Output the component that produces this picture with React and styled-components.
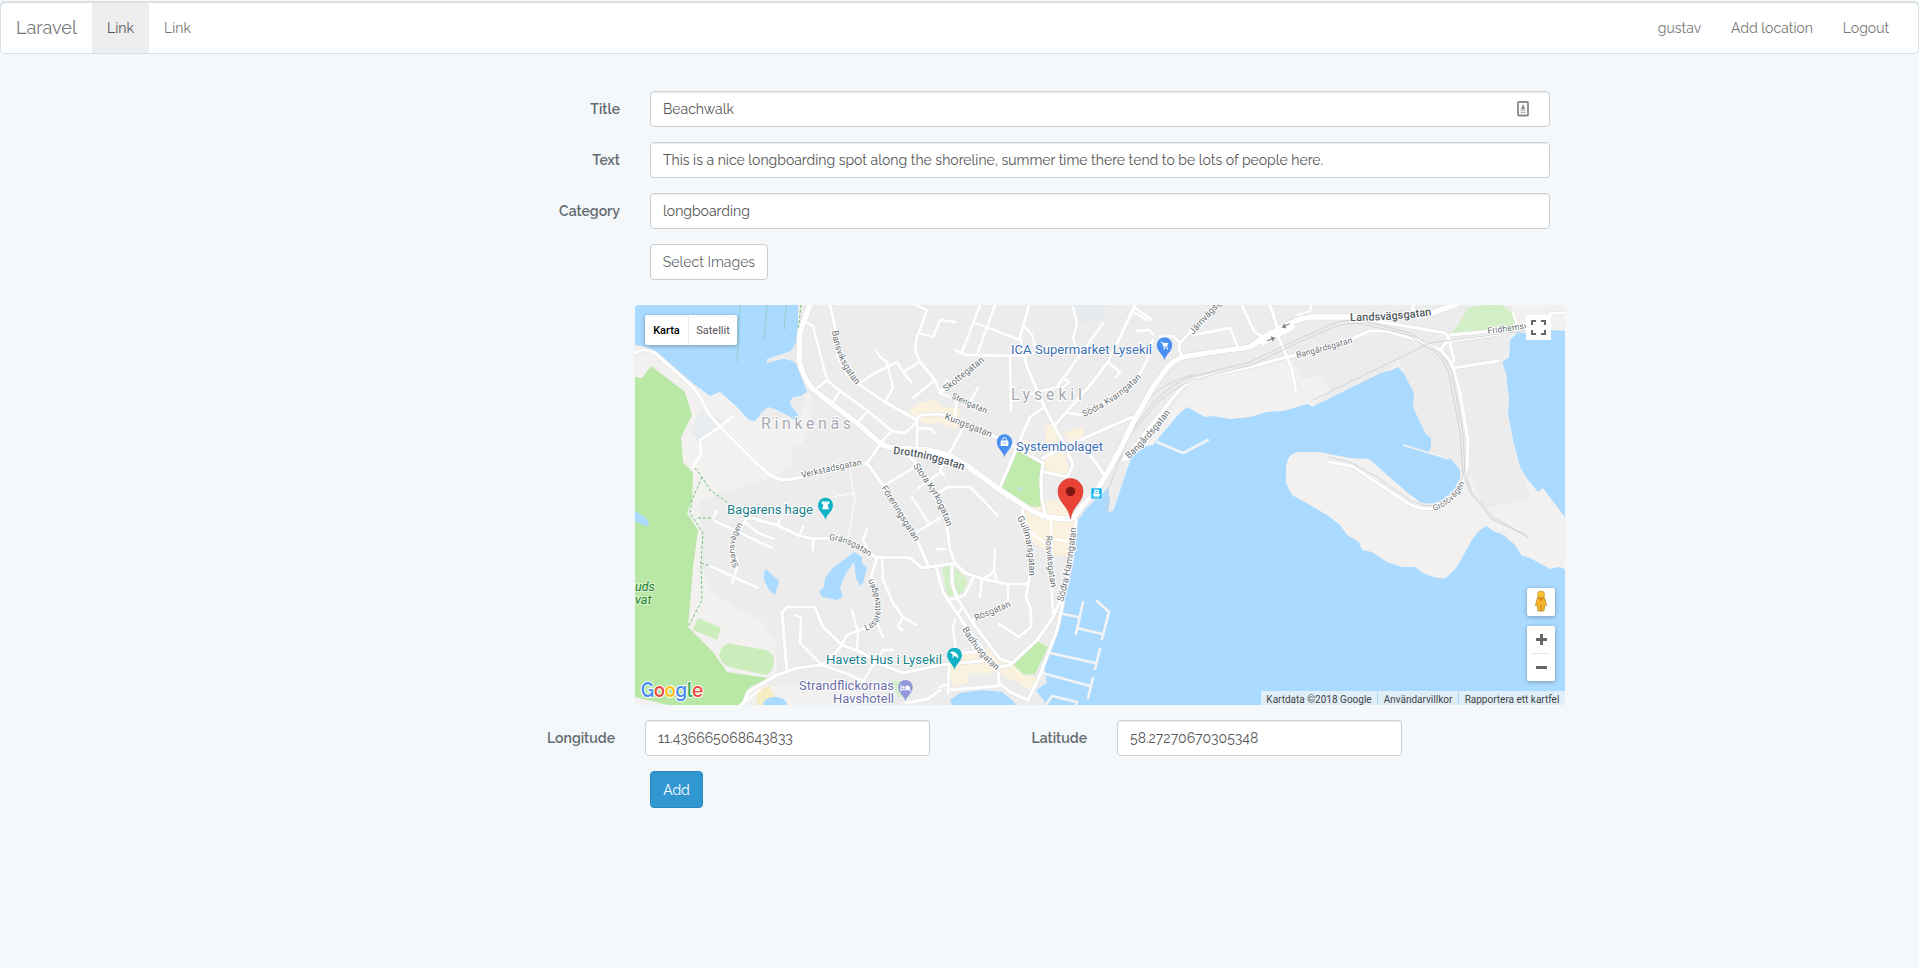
import React from "react";
import styled, { createGlobalStyle, css } from "styled-components";

const GlobalStyle = createGlobalStyle`
  * { box-sizing: border-box; }
  body {
    margin: 0;
    background: #f4f8fb;
    color: #636b6f;
    font-family: Raleway, Lato, "Open Sans", sans-serif;
    font-size: 14px;
    line-height: 22px;
    overflow: hidden;
  }
`;

const Page = styled.div`
  min-height: 968px;
  border-top: 1px solid #f8f8f8;
`;
const Navbar = styled.nav`
  display: flex;
  height: 52px;
  margin-top: 1px;
  border: 1px solid #d3e0e9;
  border-radius: 5px;
  background: #fff;
  box-shadow: 0 -1px 0 #e0e2e3;
`;
const Brand = styled.a`
  width: 91px;
  padding: 14px 0 0 15px;
  font-size: 18px;
  color: #777;
`;
const NavItem = styled.a`
  width: ${(p) => p.$w}px;
  padding-top: 14px;
  text-align: center;
  color: ${(p) => (p.$active ? "#555" : "#777")};
  background: ${(p) => (p.$active ? "#eee" : "transparent")};
`;
const NavRight = styled.div`
  display: flex;
  margin-left: auto;
  margin-right: 14px;
`;

const Form = styled.form`
  width: 1035px;
  margin: 37px 0 0 530px;
`;
const Row = styled.div`
  display: grid;
  grid-template-columns: 90px 900px;
  column-gap: 30px;
  align-items: center;
  margin-bottom: 15px;
`;
const Label = styled.label`
  font-weight: 600;
  text-align: right;
  white-space: nowrap;
`;
const Field = styled.div`
  display: flex;
  align-items: center;
  height: 36px;
  padding: 0 20px 0 12px;
  background: #fff;
  border: 1px solid #ccd0d2;
  border-radius: 4px;
  box-shadow: inset 0 1px 1px rgba(0, 0, 0, 0.075);
`;
const Input = styled.input`
  flex: 1;
  min-width: 0;
  height: 22px;
  border: 0;
  padding: 0;
  outline: 0;
  background: transparent;
  font: inherit;
  color: #555;
`;
const Button = styled.button`
  grid-column: 2;
  justify-self: start;
  width: ${(p) => p.$w}px;
  height: ${(p) => p.$h}px;
  padding: 0;
  border: 1px solid #ccc;
  border-radius: 4px;
  background: #fff;
  color: #636b6f;
  font: inherit;
  ${(p) =>
    p.$primary &&
    css`
      background: #3097d1;
      border-color: #2a88bd;
      color: #fff;
    `}
`;
const Coordinates = styled.div`
  display: grid;
  grid-template-columns: 115px 285px 187px 285px;
  align-items: center;
  margin: 15px 0;
  ${Label} { padding-right: 30px; }
`;

const MapBox = styled.div`
  position: relative;
  width: 930px;
  height: 400px;
  margin: 25px 0 15px 105px;
  border-radius: 4px;
  overflow: hidden;
  font-family: Roboto, sans-serif;
`;
const MapDrawing = styled.svg`
  display: block;
  width: 930px;
  height: 400px;
`;
const control = css`
  position: absolute;
  background: #fff;
  border-radius: 2px;
  box-shadow: 0 1px 4px rgba(0, 0, 0, 0.3);
`;
const MapTypes = styled.div`
  ${control}
  left: 10px;
  top: 10px;
  display: flex;
  height: 30px;
`;
const MapType = styled.span`
  width: ${(p) => p.$w}px;
  font-size: 11px;
  line-height: 31px;
  text-align: center;
  color: ${(p) => (p.$on ? "#000" : "#565656")};
  font-weight: ${(p) => (p.$on ? 500 : 400)};
  & + & { border-left: 1px solid #e8e8e8; }
`;
const Fullscreen = styled.div`
  ${control}
  top: 10px;
  right: 14px;
  width: 25px;
  height: 25px;
  border-radius: 0;
  box-shadow: none;
`;
const Pegman = styled.div`
  ${control}
  right: 10px;
  top: 283px;
  width: 28px;
  height: 28px;
`;
const Zoom = styled.div`
  ${control}
  right: 10px;
  top: 321px;
  width: 28px;
  height: 55px;
`;
const Legal = styled.div`
  position: absolute;
  right: 0;
  bottom: 0;
  display: flex;
  gap: 1px;
  height: 14px;
`;
const LegalItem = styled.span`
  width: ${(p) => p.$w}px;
  background: rgba(245, 245, 245, 0.72);
  font-size: 10px;
  line-height: 17px;
  text-align: center;
  white-space: nowrap;
  color: #444;
`;
const MapText = styled.text`
  font-family: ${(p) => p.$f || "Roboto"}, sans-serif;
  font-size: ${(p) => p.$s || 9}px;
  font-weight: ${(p) => p.$b || 400};
  font-style: ${(p) => (p.$i ? "italic" : "normal")};
  fill: ${(p) => p.$c || "#666c70"};
  stroke: ${(p) => p.$halo || "#fff"};
  stroke-width: 2px;
  stroke-linejoin: round;
  paint-order: stroke;
`;

const MAIN = "M810 305L800 332L799 360Q803 378 812 388L833 405L857 423L880 443Q886 447 893 448L925 450Q945 452 963 463L1000 490L1023 505Q1035 514 1047 517L1066 519Q1074 519 1077 513L1083 505L1095 493L1103 480L1120 450L1133 423L1153 387L1167 368Q1174 360 1183 357L1207 353L1250 347L1263 338L1287 325Q1298 319 1310 317L1350 317L1433 313L1457 304";

const MEDIUM = [
  "M635 353Q643 347 655 353L693 387L702 400L708 413L720 427L758 465L770 475Q780 480 787 480L803 477L837 468L867 463L880 445",
  "M830 305L835 327L838 357L847 375L860 385L885 402L917 420L920 415L940 414L1003 440L1043 463L1041 480L1042 500L1046 518",
  "M867 463L883 485L897 510L917 540L928 565",
  "M905 452L920 467L933 490L940 500L947 527L950 550L955 563L965 573L983 579L1007 584L1027 584",
  "M745 520Q750 516 758 520L777 525L800 536L813 539L830 538L863 547L875 557L910 558L922 568L950 564",
  "M743 705L748 692L777 675L797 668L822 665L840 648L847 635L873 625L879 614L878 600L871 577L877 558",
  "M787 672L782 613L787 607L815 607L823 627L842 645L863 653L878 663L903 673L940 665L990 660",
  "M936 567L943 592L958 615L985 653Q990 665 1000 667L1010 665L1037 640L1053 617L1065 590L1073 550L1076 520",
  "M952 563L952 583L957 598L973 623L1000 659L1012 663",
  "M998 668L999 683L1010 692L1028 700L1040 675L1057 630L1063 603",
  "M1029 305L1020 337L1027 367L1045 408L1067 450L1073 465L1067 477L1045 472",
  "M1135 305L1122 333L1108 362L1092 383L1055 425",
  "M1123 460L1153 423L1177 393Q1184 383 1200 378L1250 367L1287 357L1333 347L1370 331L1387 331L1417 340L1440 350Q1450 358 1454 370L1460 393L1468 440L1467 467Q1463 483 1457 490Q1446 506 1430 509Q1415 509 1403 500L1373 480L1352 466L1328 462",
  "M1370 320L1445 333L1449 339L1440 350M1449 339L1454 360L1450 366",
  "M1450 335L1483 332L1527 328L1540 323L1552 313L1565 313M1450 341L1507 333M1453 368L1498 361",
  "M1277 334L1287 357L1292 370L1296 392",
  "M1217 305L1190 332L1180 343L1179 350L1183 358",
  "M1242 305L1250 323L1255 332L1263 337M1270 305L1277 327",
  "M1043 408L1030 417L1000 487M1043 458L1073 443L1132 417M1083 445L1103 473",
  "M1022 510L1030 543L1030 573L1026 597L1031 610L1031 627L1019 637L999 624",
];

const MINOR = [
  "M733 416L720 427L700 440L701 455L693 467",
  "M807 323L813 326L827 380L815 390M827 380L840 391L868 411L892 431L880 443M840 391L832 404M868 411L857 423M892 431L905 433L917 422",
  "M860 383L875 373L897 362L903 372L920 362L935 380L913 398M876 350L880 357L887 362L893 388L885 402M903 372L911 382",
  "M915 305L927 310L917 337L915 350L920 362L935 380L940 392M918 333L933 337L940 320L955 322",
  "M917 420L917 455M917 428L932 429L934 433",
  "M885 485L920 464M918 488L940 473M912 497L930 525M917 532L940 518M937 549L945 549",
  "M783 515L777 525M803 527L799 536M813 540L813 550",
  "M745 522L737 533L732 547L738 565L732 583M715 521L772 548M717 511L713 518M745 522L758 533L774 539M710 566L758 588",
  "M795 615L801 617L800 643L822 665L850 675L863 681L872 667L883 650L893 650",
  "M852 610L858 633L857 650M882 558L883 580L893 603L903 617L916 625M903 617L898 627L902 630M877 623L883 637M867 529L863 540L868 550",
  "M947 600L957 598L965 595L973 578M955 620L953 627L956 653L977 652M949 667L948 693M948 690L998 686M940 687L948 684M957 615L962 608",
  "M740 705L760 690M905 703L928 699L940 690",
  "M1028 530L1047 545M1052 539L1072 542M995 550L994 570L997 581M994 572L982 580L980 597M1008 585L1008 600L1000 607L973 620",
  "M940 492L948 487L970 487L983 500L997 515M963 428L940 470L944 475",
  "M980 305L962 352M995 305L977 355M973 322L1020 340M955 350L965 355L1023 356L1040 351M1010 357L1011 410",
  "M983 360L940 393L947 380M957 398L955 415M978 388L970 402M940 393L985 412",
  "M1073 307L1077 323L1073 338L1077 350M1103 323L1080 355L1057 387L1027 395M1063 378L1069 382L1060 390M1025 327L1032 335L1036 350",
  "M1108 362L1120 372L1116 377M1135 308L1152 320M1133 312L1147 320M1136 331L1149 330L1153 334",
  "M1153 340L1147 360L1137 380L1120 392L1083 415L1068 413M1180 343L1173 336L1160 337M1193 335L1230 328L1237 345M1513 313L1517 325M1298 315L1310 311L1311 305M1413 305L1413 310",
  "M1123 460L1128 459",
];

const PIERS =
  "M1063 614L1078 617M1083 602L1076 634M1077 628L1102 634M1097 601L1109 612L1102 639M1050 653L1095 663M1100 649L1095 669M1042 673L1090 686M1093 678L1088 698M1047 703L1052 696L1077 702L1076 705M1157 442L1183 453L1208 440";

const RAILS = [
  "M1313 400L1430 343L1507 333L1530 330",
  "M1107 512L1108 490L1130 433L1153 403Q1174 382 1190 377L1250 362L1290 343L1330 325Q1345 319 1360 320L1410 333L1437 350Q1448 360 1452 373L1463 433L1465 473L1472 493L1482 504L1493 517L1528 537",
  "M1130 436L1156 404Q1175 387 1194 380L1252 365L1293 345L1332 328Q1346 322 1362 324L1408 335L1434 351Q1445 361 1449 374L1460 433L1463 473L1470 493L1480 504L1492 519L1527 536",
  "M1328 457L1350 462L1377 477L1410 500Q1426 508 1440 505Q1459 498 1465 470",
  "M1130 425L1152 395Q1168 382 1192 375",
];

const FOOTPATHS =
  "M801 305L798 333M695 468L702 477L710 490L727 502L740 515M702 477L692 500L690 513L703 533L701 563L702 600L688 627M698 518L713 518M701 563L710 566";

const STREETS = [
  ["verk", "M802 478Q830 471 862 465", "Verkstadsgatan", 8.8],
  ["bans", "M832 331Q836 363 858 387", "Bansviksgatan", 9.2],
  ["fore", "M881 488L895 510L920 550", "Föreningsgatan", 9.2],
  ["stora", "M913 466L930 490Q940 505 950 536", "Stora Kyrkogatan", 9.2],
  ["kung", "M944 419L1000 441", "Kungsgatan", 9.4],
  ["sten", "M951 398L995 418", "Stengatan", 8.4],
  ["skott", "M946 392L992 355", "Skottegatan", 9.2],
  ["gran", "M829 540Q850 541 875 561", "Gränsgatan", 8.6],
  ["skans", "M739 566Q727 545 746 520", "Skansvägen", 8.2],
  ["lasa", "M866 631Q893 621 870 574", "Lasarettsvägen", 8.8],
  ["gull", "M1017 518Q1030 540 1029 580", "Gullmarsgatan", 9.2],
  ["rosv", "M1046 536Q1046 561 1052 592", "Rosviksgatan", 8.7],
  ["hamn", "M1063 602Q1073 568 1077 520", "Södra Hamngatan", 9.4],
  ["rosg", "M976 621L1014 605", "Rösgatan", 9],
  ["badh", "M962 629Q975 653 1000 674", "Badhusgatan", 9.2],
  ["kvarn", "M1084 417Q1120 401 1145 374", "Södra Kvarngatan", 8.9],
  ["bang", "M1129 459Q1153 437 1176 405", "Bangårdsgatan", 9.2],
  ["bang2", "M1297 358Q1325 351 1358 341", "Bangårdsgatan", 8.6],
  ["jarn", "M1193 335L1250 272", "Järnvägsgatan", 9.2],
  ["frid", "M1488 334L1560 324", "Fridhemsvägen", 8.8],
  ["groto", "M1434 511Q1461 502 1470 468", "Grötövägen", 8.3],
];

const PIN = "M0 15C-1 9 -8 6 -8 -1A8 8 0 1 1 8 -1C8 6 1 9 0 15Z";

function Poi({ x, y, color, s = 1, children }) {
  return (
    <g transform={`translate(${x} ${y}) scale(${s})`}>
      <path d={PIN} fill={color} />
      {children}
    </g>
  );
}

function MapCanvas() {
  return (
    <MapDrawing viewBox="635 305 930 400">
      <rect x="635" y="305" width="930" height="400" fill="#ececec" />
      <g fill="#f2f1f0">
        <path d="M635 345L657 350L720 390L753 418L800 420L807 390L812 397L812 415L803 443L793 447L792 467L765 480L730 490L700 500L702 570L712 592L740 610L763 622L775 640L777 675L742 705L635 705Z" />
        <path d="M1123 470L1140 450L1190 383L1215 376L1250 370L1293 360L1300 378L1316 378L1320 372L1330 390L1312 408L1180 430Z" />
        <path d="M1280 450L1370 459L1393 480L1432 503L1460 480L1472 475L1482 506L1530 498L1526 482L1512 450L1500 365L1509 350L1512 305H1565V580H1280Z" />
        <path d="M1390 369L1398 360L1405 372L1400 380Z" />
        <path d="M742 705L760 685L860 688L860 705Z" />
      </g>
      <path d="M1460 478L1470 475L1486 508L1530 498L1525 480L1518 465L1510 430L1505 370L1498 350L1415 390L1430 445Z" fill="#ececec" />
      <path d="M690 430L702 410L722 420L700 445Z" fill="#e8ecee" />
      <path d="M1073 305H1108L1100 319L1080 323Z" fill="#e6eaed" />
      <g fill="#b9e7a6">
        <path d="M635 377L642 378L651 366L685 392L692 415L681 437L683 462L693 473L692 500L687 513L698 530L693 567L688 627L713 652L727 672L768 678L750 687L742 705H668L635 697Z" />
        <path d="M1017 451L1043 463L1041 480L1042 508L1027 505L1001 487Z" fill="#c0ebad" />
        <path d="M1037 641L1048 647L1035 674L1020 675L1012 667Z" fill="#c0ebad" />
        <path d="M698 618L721 628L717 640L693 630ZM728 643L765 650Q774 653 774 660Q774 670 767 675L733 668Q721 665 719 655Q721 646 728 643Z" fill="#cbedbc" />
        <path d="M942 568L952 565L968 580L963 593L947 597ZM1463 317L1468 308L1483 305H1502L1513 313L1515 323L1503 331L1450 333L1457 327ZM891 681H910V697H898Z" fill="#d3efc8" />
      </g>
      <g fill="#faf1df">
        <path d="M909 412L913 407L923 402L937 400L940 406L960 409L957 430L940 423L926 424L915 418Z" />
        <path d="M1044 427L1052 423L1063 447L1070 474L1057 477L1043 467L1047 450ZM1063 433L1082 426L1085 437L1071 445ZM1022 438L1040 452L1027 455Z" />
        <path d="M1023 510L1045 505L1047 500H1065L1077 517L1073 542L1068 556L1053 555L1040 547L1025 537L1029 530Z" />
        <path d="M960 655L990 648L998 658L1008 660L1025 676L1040 678L1030 690L1018 683L1000 673L968 673V682L953 688L949 667Z" />
      </g>
      <path d="M757 690L769 686L780 705H757Z" fill="#f6edc3" />
      <g fill="#aadaff">
        <path d="M635 305H798V328L796 343L791 351L767 359V363L783 359L793 361L797 365L807 392L800 396L793 397L790 401L791 406L798 415L799 424L792 418L783 413L775 409L768 407L762 412L755 421Q750 421 747 418L737 407L727 398L720 392L710 396L695 385L657 352L647 347L635 345Z" />
        <path d="M1187 407L1205 417L1212 416L1230 419L1250 417L1267 412L1283 411L1308 404L1312 407L1383 372L1390 371L1398 367L1403 372L1414 393L1413 407L1425 433L1431 438L1431 448L1428 453L1447 458L1450 458L1460 470V478L1453 492L1443 500Q1432 506 1420 502L1408 493L1393 480L1369 459L1350 458L1320 452H1303Q1292 451 1288 459L1286 467L1286 483L1292 495L1310 505L1327 515L1340 525L1347 535L1359 542L1362 550L1372 552L1387 562L1402 567L1415 567L1423 573Q1440 581 1447 577L1457 567L1473 538L1480 530L1486 526L1495 532L1502 534L1515 545L1522 556L1528 557L1550 569L1558 567L1565 569V705H1047L1036 690L1047 683L1044 665L1049 650L1060 613L1068 587L1073 560L1078 520L1087 508L1095 500L1108 488L1110 500L1108 512L1113 511L1117 500L1127 470L1135 448L1153 445L1157 440L1178 415Z" />
        <path d="M1510 340L1518 332L1534 334L1550 330L1565 331V517L1552 500L1543 488L1538 492L1528 480L1520 467L1513 440L1508 413L1509 400L1506 373L1502 362L1509 357Z" />
        <path d="M952 705L950 700L960 693L983 690L1002 692L1012 700L1016 705ZM635 511L643 516Q651 521 648 527L635 521ZM764 573L766 569L779 581L775 595L769 590L764 580ZM850 555L854 552L862 557L862 563L867 568L863 583L860 586L856 578L854 562L845 575L840 588L843 597L837 600L822 597L819 591L824 587L825 578L833 568ZM1018 488L1022 487L1021 491Z" />
        <ellipse cx="775" cy="705" rx="12" ry="8" />
      </g>
      <path d="M740 305L737 362M767 305L764 340M786 305L784 331" stroke="#91cdca" fill="none" />
      <path d="M1403 445L1449 459" stroke="#f2f1f0" strokeWidth="1.6" />
      <g fill="none" strokeLinecap="round" strokeLinejoin="round">
        <g stroke="#dedede">
          {MEDIUM.map((d) => <path key={d} d={d} strokeWidth="4.1" />)}
          <path d={MAIN} strokeWidth="6.4" />
        </g>
        <path d={FOOTPATHS} stroke="#72c17a" strokeDasharray="3 2" strokeLinecap="butt" />
        <path d="M850 470L855 500L848 538M832 497L853 493" stroke="#fff" strokeWidth="1" />
        <path d="M1051 520L1051 577L1053 613" stroke="#fff" strokeWidth="2.2" />
        <g stroke="#fff" strokeWidth="2.3">
          {MINOR.map((d) => <path key={d} d={d} />)}
          <path d={PIERS} stroke="#f3f3f3" strokeWidth="2.6" />
        </g>
        <g stroke="#fff" strokeWidth="3.2">
          {MEDIUM.map((d) => <path key={d} d={d} />)}
        </g>
        <g stroke="#cdd0d2" strokeWidth="0.9">
          {RAILS.map((d) => <path key={d} d={d} />)}
        </g>
        <path d={MAIN} stroke="#fff" strokeWidth="5.3" />
        <path d="M1263 340L1290 326" stroke="#fff" strokeWidth="9" />
        <path d="M1267.500 340.500L1272 339M1289 324L1285 325.500" stroke="#858585" strokeWidth="1.3" />
        <path d="M1270.500 336.500L1275.500 337.500L1272.500 341.500ZM1286.500 328.500L1281.500 327.500L1284.500 323.500Z" fill="#858585" />
      </g>
      <defs>
        {STREETS.map(([id, d]) => <path key={id} id={id} d={d} />)}
        <path id="drott" d="M893 454Q930 457 970 473" />
        <path id="lands" d="M1350 321Q1400 321 1445 313" />
      </defs>
      {STREETS.map(([id, , name, size]) => (
        <MapText key={id} $s={size}>
          <textPath href={`#${id}`}>{name}</textPath>
        </MapText>
      ))}
      <MapText $s={10.8} $b={500} $c="#50595e"><textPath href="#drott">Drottninggatan</textPath></MapText>
      <MapText $s={11.1} $b={500} $c="#50595e"><textPath href="#lands">Landsvägsgatan</textPath></MapText>
      <MapText x="761" y="429" $s={16} $c="#a6a9b4" textLength="90">Rinkenäs</MapText>
      <MapText x="1011" y="400" $s={16} $c="#a6a9b4" textLength="71">Lysekil</MapText>
      <MapText x="1011" y="353.500" $s={13.2} $c="#3d6fb6" textLength="141">ICA Supermarket Lysekil</MapText>
      <MapText x="1016" y="450.500" $s={13.2} $c="#3d6fb6" textLength="87">Systembolaget</MapText>
      <MapText x="727" y="513.500" $s={13.2} $c="#17818c" textLength="86">Bagarens hage</MapText>
      <MapText x="826" y="663.500" $s={13.2} $c="#17818c" textLength="116">Havets Hus i Lysekil</MapText>
      <MapText x="799" y="689.500" $s={13} $c="#6a6ea9" textLength="95">Strandflickornas</MapText>
      <MapText x="833" y="702.500" $s={13} $c="#6a6ea9" textLength="61">Havshotell</MapText>
      <MapText x="635" y="591" $s={12.5} $i $c="#21802c" $halo="#d9f2cd">uds</MapText>
      <MapText x="635" y="604" $s={12.5} $i $c="#21802c" $halo="#d9f2cd">vat</MapText>

      <Poi x={1164.5} y={346} color="#4a90f2" s={0.96}>
        <path d="M-4 -4h1.700l1.700 5h4" fill="none" stroke="#fff" strokeWidth="1" />
        <path d="M-2 -3h6l-1.300 3.200h-3.700z" fill="#fff" />
        <circle cx="-.3" cy="2.700" r=".9" fill="#fff" /><circle cx="3" cy="2.700" r=".9" fill="#fff" />
      </Poi>
      <Poi x={1004.5} y={443} color="#4a90f2" s={0.96}>
        <rect x="-4" y="-2.500" width="8" height="5.500" rx=".5" fill="#fff" />
        <path d="M-2 -2.500v-1a2 2 0 0 1 4 0v1" fill="none" stroke="#fff" />
        <path d="M-2 -.5q2 2.500 4 0" fill="none" stroke="#4a90f2" strokeWidth=".8" />
      </Poi>
      <Poi x={825.5} y={506} color="#12b2c5" s={0.93}>
        <path d="M-4 -5h2v1.300h1V-5h2v1.300h1V-5h2v2.500l-1.500 1v2.500l1 1v1.500h-7v-1.500l1-1v-2.500l-1.500-1z" fill="#fff" />
      </Poi>
      <Poi x={954.5} y={656} color="#12b2c5" s={0.93}>
        <path d="M-5 -4q4-2 7 1q3 3 2 6q-2-3-4-3q-1 2-3 2q2-2 1-3q-1-2-3-3z" fill="#fff" />
      </Poi>
      <Poi x={905.5} y={688} color="#8f97da" s={0.9}>
        <path d="M-5 -4v8M-5 2h10v2" fill="none" stroke="#fff" strokeWidth="1.2" />
        <path d="M0 -2.500h3q2 0 2 2v2h-5z" fill="#fff" /><circle cx="-2.300" cy="-.7" r="1.400" fill="#fff" />
      </Poi>
      <rect x="1091" y="488" width="11" height="11" rx="1" fill="#12b5f3" stroke="#e5f6fd" strokeWidth=".6" />
      <path d="M1093 494h7l-1 2h-5zM1094.500 490h4v3h-4zM1093 497h7" fill="#fff" stroke="#fff" strokeWidth=".7" />
      <path d="M1095.500 491.500h2" stroke="#12b5f3" />
      <path d="M1070.500 519C1069 506 1058 503 1058 491A12.500 12.500 0 1 1 1083 491C1083 503 1072 506 1070.500 519Z" fill="#ea4335" stroke="#d2372b" strokeWidth=".6" />
      <circle cx="1070.500" cy="491.500" r="4.700" fill="#7e1712" />
      <MapText x="641" y="697" $s={20.5} $b={600} $f="Raleway" $c="#4285f4" textLength="62" lengthAdjust="spacingAndGlyphs">
        G<tspan fill="#ea4335">o</tspan><tspan fill="#fbbc05">o</tspan>g<tspan fill="#34a853">l</tspan><tspan fill="#ea4335">e</tspan>
      </MapText>
    </MapDrawing>
  );
}

export default function App() {
  return (
    <Page>
      <GlobalStyle />
      <Navbar>
        <Brand>Laravel</Brand>
        <NavItem $w={57} $active>Link</NavItem>
        <NavItem $w={57}>Link</NavItem>
        <NavRight>
          <NavItem $w={73}>gustav</NavItem>
          <NavItem $w={112}>Add location</NavItem>
          <NavItem $w={76}>Logout</NavItem>
        </NavRight>
      </Navbar>
      <Form>
        <Row>
          <Label>Title</Label>
          <Field>
            <Input defaultValue="Beachwalk" />
            <svg width="12" height="16" viewBox="0 0 12 16">
              <rect x="1" y="1" width="10" height="13.500" rx="1" fill="#fff" stroke="#8a8a8a" strokeWidth="1.800" />
              <path d="M6 3L8 8H4Z" fill="#888" />
              <path d="M3.500 8.500h5v1.300h-5zM3.500 10.700h5V12h-5z" fill="#b0b0b0" />
            </svg>
          </Field>
        </Row>
        <Row>
          <Label>Text</Label>
          <Field>
            <Input defaultValue="This is a nice longboarding spot along the shoreline, summer time there tend to be lots of people here." />
          </Field>
        </Row>
        <Row>
          <Label>Category</Label>
          <Field><Input defaultValue="longboarding" /></Field>
        </Row>
        <Row>
          <Button type="button" $w={118} $h={36}>Select Images</Button>
        </Row>
        <MapBox>
          <MapCanvas />
          <MapTypes>
            <MapType $w={43} $on>Karta</MapType>
            <MapType $w={49}>Satellit</MapType>
          </MapTypes>
          <Fullscreen>
            <svg width="25" height="25" fill="none" stroke="#666" strokeWidth="2">
              <path d="M6 10V6H10M15 6H19V10M19 15V19H15M10 19H6V15" />
            </svg>
          </Fullscreen>
          <Pegman>
            <svg width="28" height="28">
              <path d="M10.500 9.500h7l2 8-2 .5-.5 5h-6l-.5-5-2-.5z" fill="#f6b526" stroke="#b98b32" strokeWidth=".8" />
              <circle cx="14" cy="6.500" r="3.500" fill="#fbc02d" stroke="#b98b32" strokeWidth=".7" />
              <path d="M11 10h6l-3 3z" fill="#e27d1b" /><path d="M14 17v6" stroke="#b9791e" />
            </svg>
          </Pegman>
          <Zoom>
            <svg width="28" height="55">
              <path d="M9 13.500h11M14.500 8v11M9 41.500h11" stroke="#666" strokeWidth="3" />
              <path d="M4 27.500h19" stroke="#e6e6e6" />
            </svg>
          </Zoom>
          <Legal>
            <LegalItem $w={116}>Kartdata ©2018 Google</LegalItem>
            <LegalItem $w={80}>Användarvillkor</LegalItem>
            <LegalItem $w={106}>Rapportera ett kartfel</LegalItem>
          </Legal>
        </MapBox>
        <Coordinates>
          <Label>Longitude</Label>
          <Field><Input defaultValue="11.436665068643833" /></Field>
          <Label>Latitude</Label>
          <Field><Input defaultValue="58.27270670305348" /></Field>
        </Coordinates>
        <Row>
          <Button type="button" $primary $w={53} $h={37}>Add</Button>
        </Row>
      </Form>
    </Page>
  );
}
